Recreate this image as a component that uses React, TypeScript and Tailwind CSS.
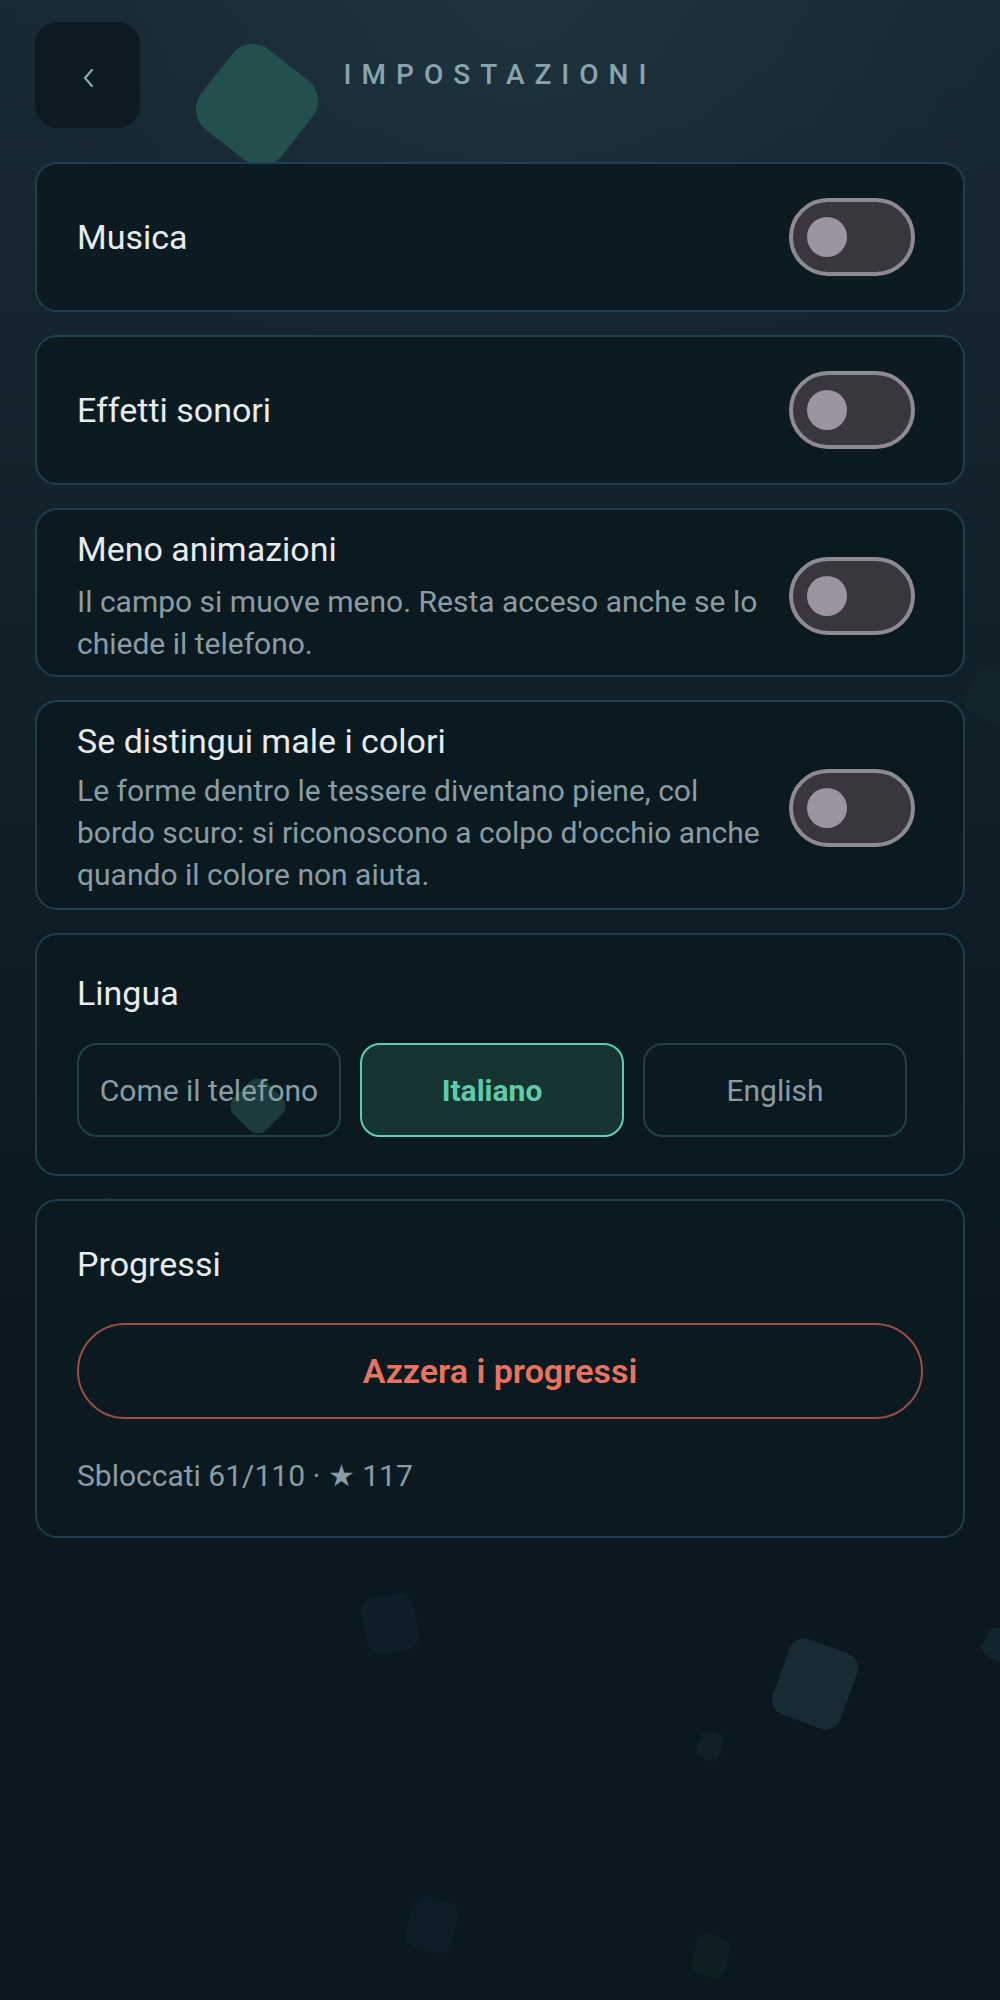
import React from 'react';

const shapes = [
  'left-[206px] top-[54px] h-[102px] w-[102px] rotate-[38deg] rounded-[26px] bg-[#234f4e]',
  'left-[968px] top-[672px] h-[48px] w-[48px] rotate-[30deg] rounded-[12px] bg-[#12252d]',
  'left-[75px] top-[1205px] h-[75px] w-[75px] rotate-[35deg] rounded-[20px] bg-[#13292d]',
  'left-[655px] top-[1150px] h-[24px] w-[24px] rotate-45 rounded-[7px] bg-[#112328]',
  'left-[364px] top-[1595px] h-[58px] w-[52px] rotate-[-12deg] rounded-[14px] bg-[#0f1f29]',
  'left-[779px] top-[1644px] h-[80px] w-[72px] rotate-[20deg] rounded-[16px] bg-[#182b35]',
  'left-[698px] top-[1732px] h-[28px] w-[24px] rotate-[20deg] rounded-[8px] bg-[#0f2029]',
  'left-[984px] top-[1630px] h-[30px] w-[30px] rotate-[30deg] rounded-[8px] bg-[#12252e]',
  'left-[409px] top-[1899px] h-[52px] w-[46px] rotate-[15deg] rounded-[12px] bg-[#0e1e28]',
  'left-[694px] top-[1936px] h-[40px] w-[34px] rotate-[15deg] rounded-[10px] bg-[#0f2024]',
];

function Toggle() {
  return (
    <div className="ml-auto mr-[8px] flex h-[78px] w-[126px] shrink-0 items-center rounded-full border-4 border-[#8e8a93] bg-[#3a363e] pl-[14px]">
      <div className="h-[40px] w-[40px] rounded-full bg-[#9a95a0]" />
    </div>
  );
}

const card = 'rounded-[22px] border-2 border-[#1f3f4c] bg-[#0c1a21]/95 px-[40px]';
const title = 'text-[34px] leading-[44px] text-[#e7ebee]';
const desc = 'text-[30px] leading-[42px] text-[#8a9ca4]';

export default function App() {
  return (
    <div className="relative min-h-[2000px] w-full overflow-hidden bg-[radial-gradient(ellipse_520px_380px_at_52%_0%,rgba(38,62,74,0.5),transparent),linear-gradient(180deg,#172933_0%,#102029_700px,#0b1820_1300px)] font-['Roboto',sans-serif]">
      <div className="pointer-events-none absolute inset-0">
        {shapes.map((s, i) => (
          <div key={i} className={`absolute ${s}`} />
        ))}
      </div>

      <div className="relative px-[35px] pt-[22px]">
        <header className="flex h-[106px] items-center">
          <button className="flex h-[106px] w-[105px] items-center justify-center rounded-[22px] bg-[#0e1b22]">
            <svg width="14" height="20" viewBox="0 0 14 20" fill="none" className="mt-[6px]">
              <path d="M11 2 L4 10 L11 18" stroke="#8fa5ad" strokeWidth="2.2" strokeLinecap="round" strokeLinejoin="round" />
            </svg>
          </button>
          <h1 className="flex-1 text-center text-[28px] font-medium tracking-[10px] text-[#8aa4ad]">
            IMPOSTAZIONI
          </h1>
          <div className="w-[105px]" />
        </header>

        <div className="mt-[34px] flex flex-col gap-[23px]">
          <div className={`${card} flex h-[150px] items-center`}>
            <span className={title}>Musica</span>
            <Toggle />
          </div>

          <div className={`${card} flex h-[150px] items-center`}>
            <span className={title}>Effetti sonori</span>
            <Toggle />
          </div>

          <div className={`${card} flex items-center pb-[10px] pt-[17px]`}>
            <div className="w-[702px]">
              <div className={title}>Meno animazioni</div>
              <div className={`mt-[10px] ${desc}`}>
                Il campo si muove meno. Resta acceso anche se lo chiede il telefono.
              </div>
            </div>
            <Toggle />
          </div>

          <div className={`${card} flex items-center pb-[12px] pt-[17px]`}>
            <div className="w-[702px]">
              <div className={title}>Se distingui male i colori</div>
              <div className={`mt-[7px] ${desc}`}>
                Le forme dentro le tessere diventano piene, col bordo scuro: si riconoscono a colpo
                d'occhio anche quando il colore non aiuta.
              </div>
            </div>
            <Toggle />
          </div>

          <div className={`${card} pb-[37px] pt-[36px]`}>
            <div className={title}>Lingua</div>
            <div className="mt-[28px] flex gap-[19px]">
              <button className="relative h-[94px] w-[264px] rounded-[20px] border-2 border-[#22404c] text-[30px] text-[#8a9ca4]">
                <div className="absolute left-[156px] top-[38px] h-[46px] w-[46px] rotate-45 rounded-[12px] bg-[#1b3b3c]" />
                <span className="relative">Come il telefono</span>
              </button>
              <button className="h-[94px] w-[264px] rounded-[20px] border-2 border-[#5ecfae] bg-[#163431] text-[30px] font-bold text-[#5fcca8]">
                Italiano
              </button>
              <button className="h-[94px] w-[264px] rounded-[20px] border-2 border-[#22404c] text-[30px] text-[#8a9ca4]">
                English
              </button>
            </div>
          </div>

          <div className={`${card} pb-[39px] pt-[41px]`}>
            <div className={title}>Progressi</div>
            <button className="mt-[37px] h-[96px] w-full rounded-full border-2 border-[#9a4d45] text-[34px] font-semibold text-[#ea735f]">
              Azzera i progressi
            </button>
            <div className="mt-[36px] text-[30px] leading-[42px] text-[#8a9ca4]">
              Sbloccati 61/110 · ★ 117
            </div>
          </div>
        </div>
      </div>
    </div>
  );
}
